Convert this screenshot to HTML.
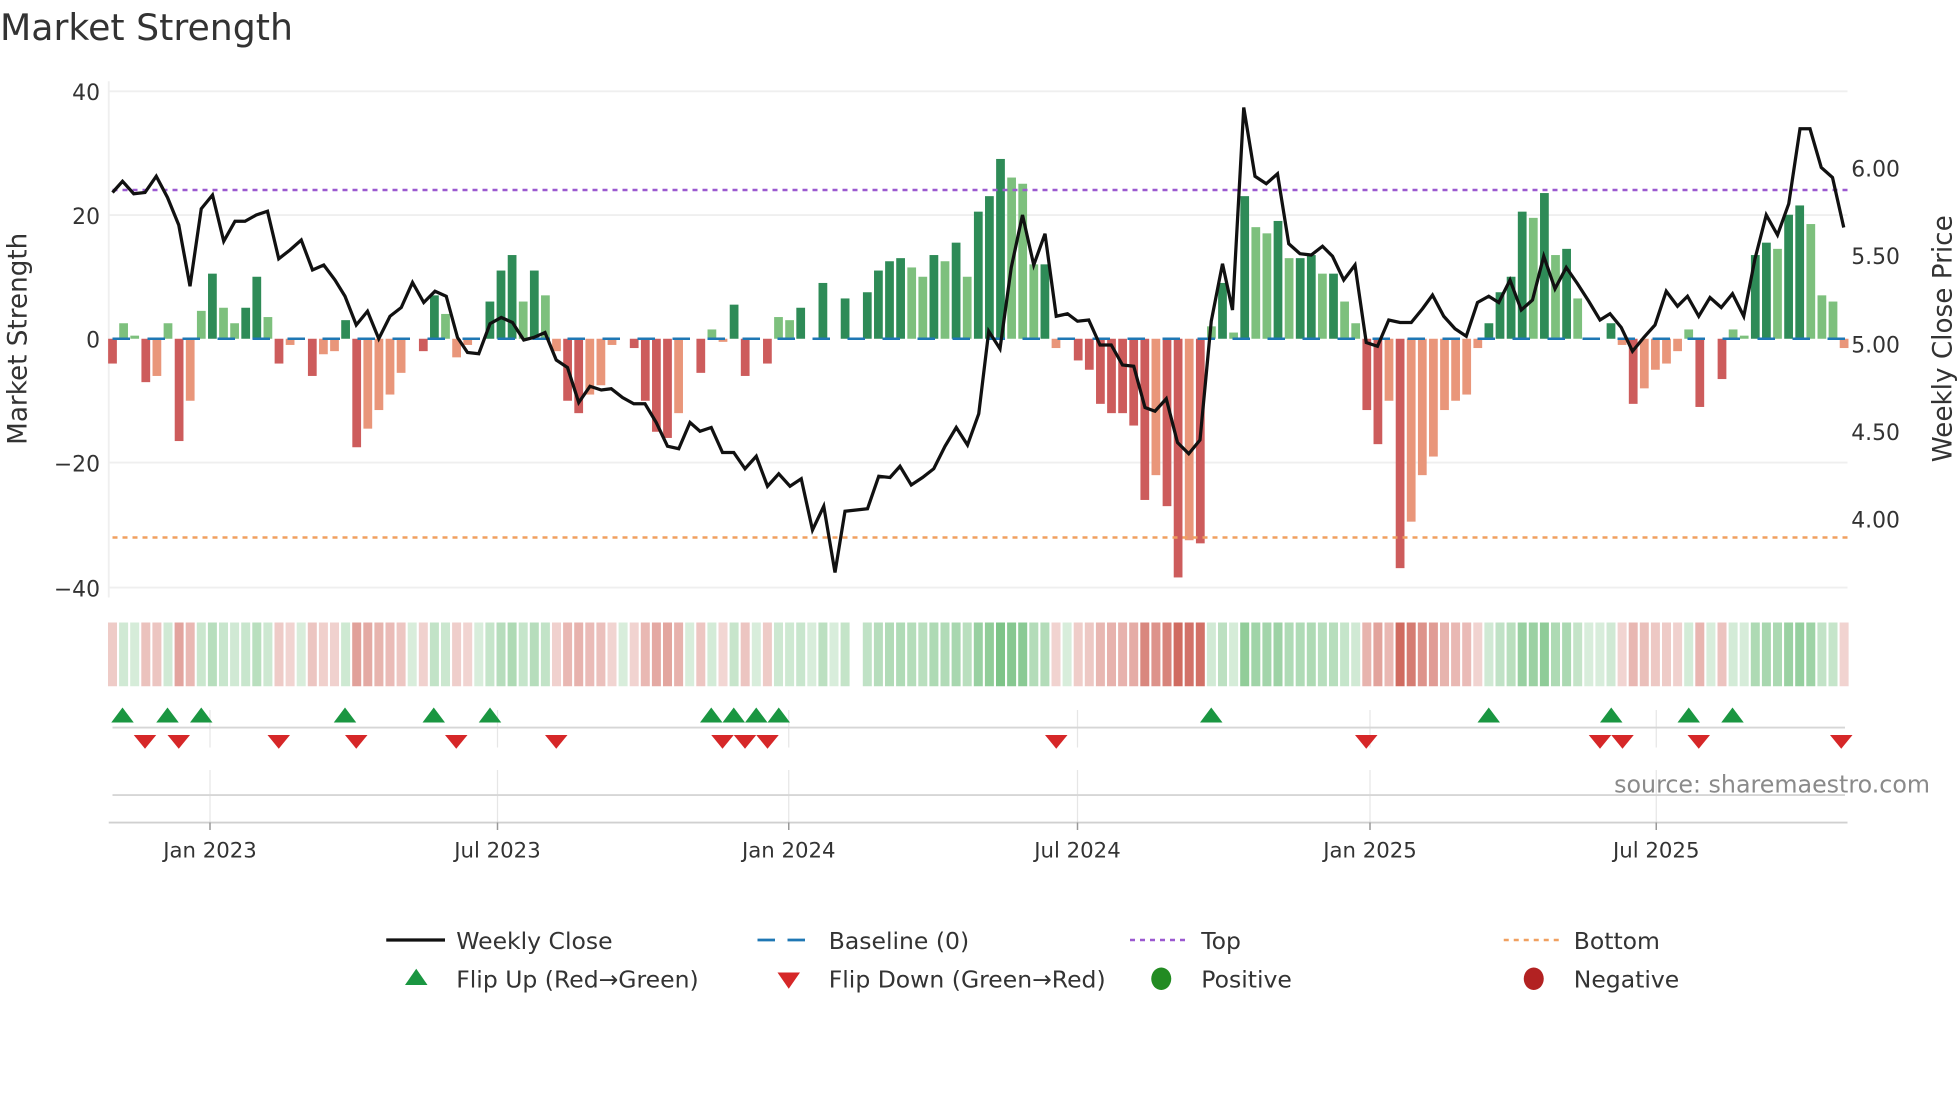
<!DOCTYPE html>
<html><head><meta charset="utf-8"><style>
html,body{margin:0;padding:0;background:#fff;width:1960px;height:1102px;overflow:hidden}
svg{display:block}
text{font-family:"DejaVu Sans","Liberation Sans",sans-serif;fill:#333}
</style></head><body>
<svg id="s" width="1960" height="1102" viewBox="0 0 1568 881.6" xmlns="http://www.w3.org/2000/svg">
<text x="0" y="32" font-size="29" fill="#333">Market Strength</text>
<g id="grid" stroke="#efefef" stroke-width="1.5">
<line x1="87" y1="73" x2="1478" y2="73"/><line x1="87" y1="172" x2="1478" y2="172"/>
<line x1="87" y1="370" x2="1478" y2="370"/><line x1="87" y1="470" x2="1478" y2="470"/>
<line x1="87" y1="65" x2="87" y2="478"/>
</g>
<g font-size="17.5" text-anchor="end">
<text x="80" y="80">40</text><text x="80" y="179">20</text><text x="80" y="278">0</text>
<text x="80" y="377">−20</text><text x="80" y="477">−40</text>
</g>
<g font-size="17.5">
<text x="1481" y="141">6.00</text><text x="1481" y="211">5.50</text><text x="1481" y="282">5.00</text>
<text x="1481" y="352">4.50</text><text x="1481" y="422">4.00</text>
</g>
<text transform="translate(21,271) rotate(-90)" font-size="21" text-anchor="middle">Market Strength</text>
<text transform="translate(1561,271) rotate(-90)" font-size="21" text-anchor="middle">Weekly Close Price</text>
<g id="bars"></g>
<line x1="90" y1="271" x2="1478" y2="271" stroke="#1f77b4" stroke-width="2" stroke-dasharray="14,14"/>
<line x1="90" y1="152" x2="1478" y2="152" stroke="#9b59d0" stroke-width="2" stroke-dasharray="4,4"/>
<line x1="90" y1="430" x2="1478" y2="430" stroke="#f0a060" stroke-width="2" stroke-dasharray="4,4"/>
<polyline id="price" fill="none" stroke="#111" stroke-width="2.6" stroke-linejoin="miter"/>
<g id="strip"></g>
<g stroke="#e6e6e6" stroke-width="1">
<line x1="168" y1="568" x2="168" y2="598"/><line x1="398" y1="568" x2="398" y2="598"/><line x1="631" y1="568" x2="631" y2="598"/><line x1="862" y1="568" x2="862" y2="598"/><line x1="1096" y1="568" x2="1096" y2="598"/><line x1="1325" y1="568" x2="1325" y2="598"/>
<line x1="168" y1="616" x2="168" y2="658"/><line x1="398" y1="616" x2="398" y2="658"/><line x1="631" y1="616" x2="631" y2="658"/><line x1="862" y1="616" x2="862" y2="658"/><line x1="1096" y1="616" x2="1096" y2="658"/><line x1="1325" y1="616" x2="1325" y2="658"/>
</g>
<line x1="90" y1="582" x2="1476" y2="582" stroke="#d6d6d6" stroke-width="1.5"/>
<line x1="90" y1="636" x2="1476" y2="636" stroke="#d6d6d6" stroke-width="1.5"/>
<line x1="87" y1="658" x2="1478" y2="658" stroke="#d0d0d0" stroke-width="1.5"/>
<g id="marks"></g>
<g stroke="#999" stroke-width="1.2">
<line x1="168" y1="658" x2="168" y2="664"/><line x1="398" y1="658" x2="398" y2="664"/><line x1="631" y1="658" x2="631" y2="664"/><line x1="862" y1="658" x2="862" y2="664"/><line x1="1096" y1="658" x2="1096" y2="664"/><line x1="1325" y1="658" x2="1325" y2="664"/>
</g>
<text x="1544" y="634" font-size="19" text-anchor="end" style="fill:#8a8a8a">source: sharemaestro.com</text>
<g font-size="17" text-anchor="middle">
<text x="168" y="686">Jan 2023</text><text x="398" y="686">Jul 2023</text><text x="631" y="686">Jan 2024</text>
<text x="862" y="686">Jul 2024</text><text x="1096" y="686">Jan 2025</text><text x="1325" y="686">Jul 2025</text>
</g>
<g font-size="18.8">
<line x1="309" y1="752" x2="356" y2="752" stroke="#111" stroke-width="2.6"/>
<text x="365" y="759">Weekly Close</text>
<line x1="606" y1="752" x2="652" y2="752" stroke="#1f77b4" stroke-width="2.2" stroke-dasharray="14,10"/>
<text x="663" y="759">Baseline (0)</text>
<line x1="904" y1="752" x2="950" y2="752" stroke="#9b59d0" stroke-width="2" stroke-dasharray="4,4"/>
<text x="961" y="759">Top</text>
<line x1="1203" y1="752" x2="1249" y2="752" stroke="#f0a060" stroke-width="2" stroke-dasharray="4,4"/>
<text x="1259" y="759">Bottom</text>
<polygon points="324,788 342,788 333,775" fill="#1a9641"/>
<text x="365" y="790">Flip Up (Red→Green)</text>
<polygon points="622,778 640,778 631,791" fill="#d62728"/>
<text x="663" y="790">Flip Down (Green→Red)</text>
<ellipse cx="929" cy="783" rx="8" ry="9" fill="#228b22"/>
<text x="961" y="790">Positive</text>
<ellipse cx="1227" cy="783" rx="8" ry="9" fill="#b22222"/>
<text x="1259" y="790">Negative</text>
</g>
</svg>
<script>
var v=[-4,2.5,0.5,-7,-6,2.5,-16.5,-10,4.5,10.5,5,2.5,5,10,3.5,-4,-1,0,-6,-2.5,-2,3,-17.5,-14.5,-11.5,-9,-5.5,0,-2,7,4,-3,-1,0,6,11,13.5,6,11,7,-2,-10,-12,-9,-7.5,-1,0,-1.5,-10,-15,-16,-12,0,-5.5,1.5,-0.5,5.5,-6,0,-4,3.5,3,5,0,9,0,6.5,0,7.5,11,12.5,13,11.5,10,13.5,12.5,15.5,10,20.5,23,29,26,25,12,12,-1.5,0,-3.5,-5,-10.5,-12,-12,-14,-26,-22,-27,-38.5,-32.5,-33,2,9,1,23,18,17,19,13,13,13.5,10.5,10.5,6,2.5,-11.5,-17,-10,-37,-29.5,-22,-19,-11.5,-10,-9,-1.5,2.5,7.5,10,20.5,19.5,23.5,13.5,14.5,6.5,0,0,2.5,-1,-10.5,-8,-5,-4,-2,1.5,-11,0,-6.5,1.5,0.5,13.5,15.5,14.5,20,21.5,18.5,7,6,-1.5];
var NS="http://www.w3.org/2000/svg";
function el(p,t,a){var e=document.createElementNS(NS,t);for(var k in a)e.setAttribute(k,a[k]);p.appendChild(e);return e;}
var bars=document.getElementById('bars'),strip=document.getElementById('strip');
for(var i=0;i<v.length;i++){
 var x=90+i*8.88, val=v[i], prev=i>0?v[i-1]:0;
 var strong=Math.abs(val)>=Math.abs(prev);
 var c;
 if(val>0)c=strong?'#2e8b57':'#7dc07d'; else c=strong?'#cd5c5c':'#e9967a';
 if(val!==0){var y=271-val*4.96;el(bars,'rect',{x:x-3.5,y:Math.min(y,271),width:7,height:Math.abs(val*4.96),fill:c});}
 if(i==67)continue;
 var a=0.2+Math.min(Math.abs(val),35)/35*0.55;
 el(strip,'rect',{x:x-3.6,y:498,width:7.2,height:51,fill:val>=0?'#3aa54a':'#c0392b','fill-opacity':a});
}
var p=[[90,154],[98,145],[107,155],[116,154],[125,141],[134,158],[143,180],[152,229],[161,167],[170,156],[179,193],[188,177],[196,177],[205,172],[214,169],[223,207],[232,200],[241,192],[250,216],[259,212],[268,224],[276,237],[285,260],[294,249],[303,271],[312,253],[321,246],[330,226],[339,242],[348,233],[357,237],[366,270],[374,282],[383,283],[392,259],[401,254],[410,258],[419,272],[427,270],[436,266],[445,288],[454,294],[463,322],[472,309],[481,312],[489,311],[498,318],[507,323],[516,323],[525,338],[534,357],[543,359],[552,338],[560,345],[569,342],[578,362],[587,362],[596,375],[605,365],[614,389],[623,379],[632,389],[641,383],[650,424],[659,405],[668,458],[676,409],[685,408],[694,407],[703,381],[712,382],[720,373],[729,388],[738,382],[747,375],[756,357],[765,342],[774,356],[783,331],[791,265],[800,279],[809,214],[818,172],[827,212],[836,187],[845,253],[854,251],[862,257],[871,256],[880,276],[889,276],[898,292],[907,293],[916,326],[924,329],[933,319],[942,354],[951,363],[960,352],[969,257],[978,211],[986,248],[995,86],[1004,141],[1013,147],[1022,139],[1031,195],[1040,203],[1049,204],[1058,197],[1066,205],[1075,224],[1084,212],[1093,274],[1102,277],[1111,256],[1120,258],[1129,258],[1138,247],[1146,236],[1155,253],[1164,263],[1173,269],[1182,242],[1191,237],[1199,242],[1208,224],[1217,248],[1226,240],[1235,205],[1244,231],[1253,214],[1262,227],[1271,241],[1280,256],[1288,251],[1297,262],[1306,281],[1315,270],[1324,260],[1333,233],[1342,245],[1350,237],[1359,253],[1368,238],[1377,246],[1386,235],[1395,253],[1404,207],[1413,172],[1422,188],[1431,163],[1440,103],[1448,103],[1457,134],[1466,142],[1475,182]];
document.getElementById('price').setAttribute('points',p.map(function(q){return q.join(',')}).join(' '));
var m=document.getElementById('marks');
[98,134,161,276,347,392,569,587,605,623,969,1191,1289,1351,1386].forEach(function(x){el(m,'polygon',{points:(x-9)+',578 '+(x+9)+',578 '+x+',566',fill:'#1a9641'});});
[116,143,223,285,365,445,578,596,614,845,1093,1280,1298,1359,1473].forEach(function(x){el(m,'polygon',{points:(x-9)+',588 '+(x+9)+',588 '+x+',599',fill:'#d62728'});});
</script>
</body></html>
